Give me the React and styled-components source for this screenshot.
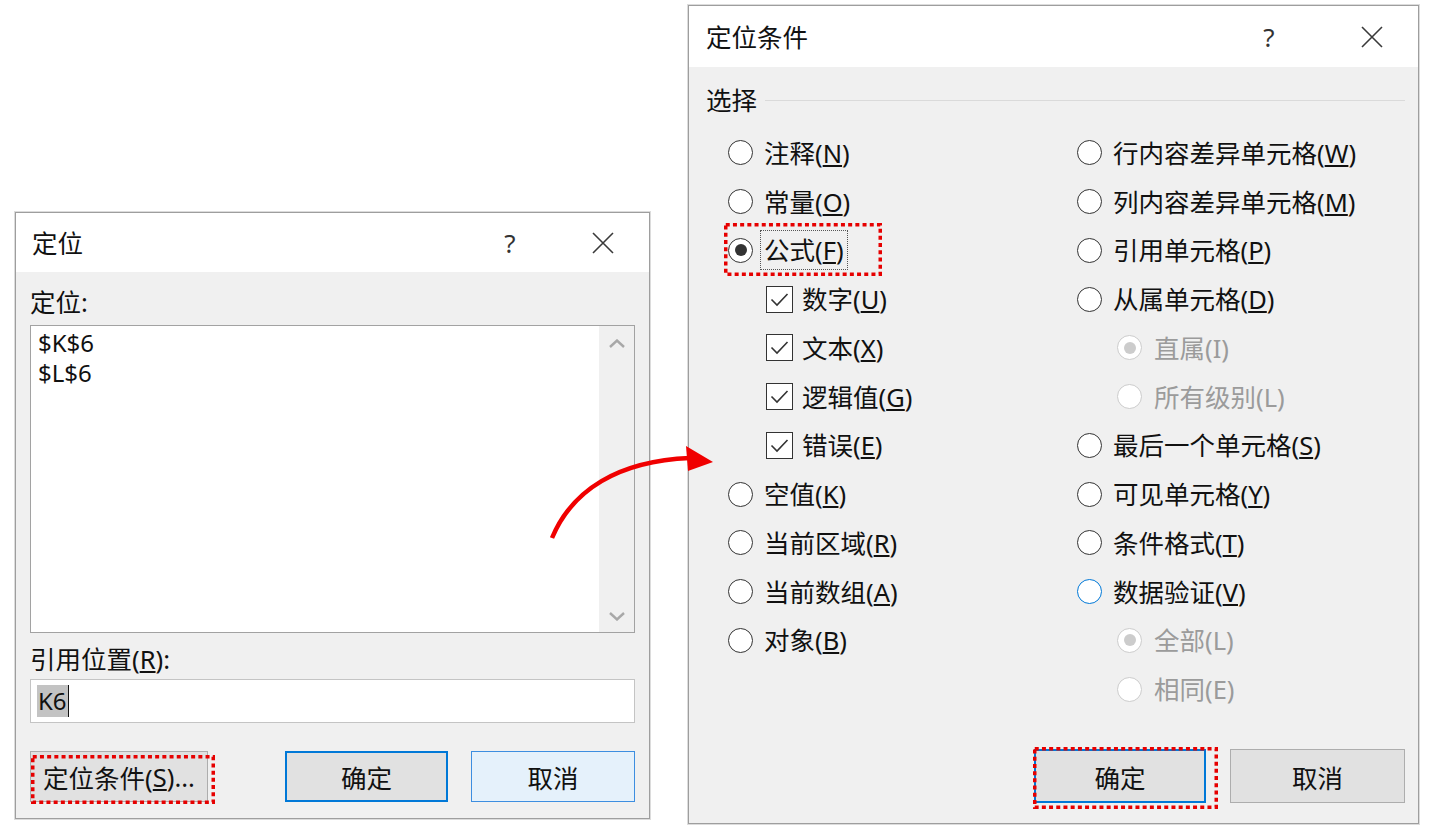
import React from "react";
import styled, { createGlobalStyle } from "styled-components";

const GlobalStyle = createGlobalStyle`
  html, body {
    margin: 0;
    padding: 0;
    background: #fff;
  }
  body {
    font-family: "Noto Sans", "Noto Sans CJK SC", sans-serif;
    color: #111;
  }
`;

const Page = styled.div`
  position: relative;
  width: 1433px;
  height: 835px;
  box-sizing: border-box;
  padding: 5px 0 0 15px;
  display: flex;
  align-items: flex-start;
  gap: 38px;
`;

const Dialog = styled.div`
  width: ${(p) => p.$w}px;
  height: ${(p) => p.$h}px;
  margin-top: ${(p) => p.$top || 0}px;
  box-sizing: border-box;
  border: 1px solid #9e9e9e;
  box-shadow: 0 0 0 1px #dcdcdc;
  background: #f0f0f0;
  display: flex;
  flex-direction: column;
`;

const TitleBar = styled.div`
  height: ${(p) => p.$h}px;
  flex: none;
  background: #fff;
  display: flex;
  align-items: center;
  padding-left: ${(p) => p.$pad}px;
  font-size: 25.5px;
  line-height: 30px;
`;

const TitleText = styled.div`
  flex: 1;
`;

const TitleButtons = styled.div`
  display: flex;
  align-items: center;
  gap: ${(p) => p.$gap}px;
  margin-right: 26px;
`;

const HelpGlyph = styled.span`
  width: 40px;
  text-align: center;
  font-size: 26px;
  color: #333;
`;

const CloseGlyph = styled.span`
  width: 40px;
  height: 30px;
  display: flex;
  align-items: center;
  justify-content: center;
`;

const Body = styled.div`
  flex: 1;
  display: flex;
  flex-direction: column;
  padding: ${(p) => p.$pad};
`;

const Label = styled.div`
  font-size: 25.5px;
  line-height: 30px;
  margin-top: ${(p) => p.$mt || 0}px;
`;

const ListBox = styled.div`
  margin-top: 8px;
  height: 308px;
  box-sizing: border-box;
  border: 1px solid #a2a2a2;
  background: #fff;
  display: flex;
`;

const ListItems = styled.div`
  flex: 1;
  padding: 2px 7px;
  font-size: 24px;
  line-height: 30px;
`;

const ScrollTrack = styled.div`
  width: 35px;
  background: #f0f0f0;
  display: flex;
  flex-direction: column;
  justify-content: space-between;
  align-items: center;
  padding: 13px 0 11px;
`;

const TextInput = styled.div`
  margin-top: 5px;
  height: 44px;
  box-sizing: border-box;
  border: 1px solid #c4c4c4;
  background: #fff;
  display: flex;
  align-items: center;
  padding-left: 6px;
  font-size: 24px;
`;

const Selected = styled.span`
  background: #c3c3c3;
  line-height: 32px;
  padding: 0 1px;
`;

const Caret = styled.span`
  width: 1.5px;
  height: 32px;
  background: #111;
`;

const ButtonRow = styled.div`
  margin-top: auto;
  display: flex;
  align-items: center;
  gap: ${(p) => p.$gap}px;
  justify-content: flex-end;
`;

const Spacer = styled.div`
  flex: 1;
`;

const Button = styled.div`
  position: relative;
  width: ${(p) => p.$w}px;
  height: ${(p) => p.$h}px;
  box-sizing: border-box;
  display: flex;
  align-items: center;
  justify-content: center;
  font-size: 25.5px;
  background: ${(p) => (p.$variant === "hover" ? "#e5f1fb" : "#e1e1e1")};
  border: ${(p) =>
    p.$variant === "default"
      ? "2px solid #0078d7"
      : p.$variant === "hover"
      ? "1.5px solid #3d8ee0"
      : "1px solid #adadad"};
`;

const Frame = styled.svg`
  position: absolute;
  left: ${(p) => p.$x}px;
  top: ${(p) => p.$y}px;
  pointer-events: none;
  overflow: visible;
`;

const GroupHead = styled.div`
  display: flex;
  align-items: center;
  font-size: 25.5px;
  line-height: 30px;
`;

const GroupLine = styled.div`
  flex: 1;
  height: 1px;
  background: #dadada;
  margin-left: 8px;
`;

const Options = styled.div`
  margin-top: 13.6px;
  margin-left: 22px;
  display: grid;
  grid-template-columns: 349px 1fr;
`;

const Column = styled.div`
  display: flex;
  flex-direction: column;
`;

const Row = styled.div`
  position: relative;
  height: 48.75px;
  display: flex;
  align-items: center;
  padding-left: ${(p) => p.$indent || 0}px;
  gap: ${(p) => p.$gap || 11}px;
  font-size: 25.5px;
  line-height: 30px;
  color: ${(p) => (p.$disabled ? "#9b9b9b" : "inherit")};
`;

const RadioDot = styled.span`
  position: relative;
  flex: none;
  width: 25px;
  height: 25px;
  box-sizing: border-box;
  border-radius: 50%;
  background: #fff;
  border: 1.6px solid
    ${(p) => (p.$disabled ? "#cccccc" : p.$hover ? "#0078d7" : "#333")};
  &::after {
    content: "";
    display: ${(p) => (p.$checked ? "block" : "none")};
    position: absolute;
    left: 50%;
    top: 50%;
    width: 12px;
    height: 12px;
    margin: -6px 0 0 -6px;
    border-radius: 50%;
    background: ${(p) => (p.$disabled ? "#cccccc" : "#333")};
  }
`;

const CheckBox = styled.span`
  flex: none;
  width: 27px;
  height: 27px;
  box-sizing: border-box;
  border: 1.6px solid #333;
  background: #fff;
  display: flex;
`;

const FocusText = styled.span`
  margin: -5px -4px;
  padding: 4px 3px;
  border: 1px dotted #555;
`;

const Overlay = styled.svg`
  position: absolute;
  left: 0;
  top: 0;
  pointer-events: none;
`;

const Dotted = ({ x, y, w, h }) => (
  <Frame $x={x} $y={y} width={w} height={h}>
    <rect
      x="1.75"
      y="1.75"
      width={w - 3.5}
      height={h - 3.5}
      fill="none"
      stroke="#e60000"
      strokeWidth="3.5"
      strokeDasharray="4 3.2"
    />
  </Frame>
);

const CloseIcon = () => (
  <svg width="22" height="22" viewBox="0 0 22 22">
    <path d="M1 1 L21 21 M21 1 L1 21" stroke="#3a3a3a" strokeWidth="1.6" fill="none" />
  </svg>
);

const Chevron = ({ up }) => (
  <svg width="16" height="9" viewBox="0 0 16 9">
    <path
      d={up ? "M1 8 L8 1.5 L15 8" : "M1 1 L8 7.5 L15 1"}
      stroke="#a8a8a8"
      strokeWidth="2.4"
      fill="none"
    />
  </svg>
);

const CheckMark = () => (
  <svg width="24" height="24" viewBox="0 0 24 24">
    <path d="M4.5 12.5 L10 18 L20.5 7" stroke="#333" strokeWidth="1.6" fill="none" />
  </svg>
);

const Title = ({ text, h, pad, helpGap }) => (
  <TitleBar $h={h} $pad={pad}>
    <TitleText>{text}</TitleText>
    <TitleButtons $gap={helpGap}>
      <HelpGlyph>?</HelpGlyph>
      <CloseGlyph>
        <CloseIcon />
      </CloseGlyph>
    </TitleButtons>
  </TitleBar>
);

const Key = ({ k }) => (
  <>
    (<u>{k}</u>)
  </>
);

const Radio = ({ label, k, checked, disabled, hover, indent }) => (
  <Row $indent={indent} $disabled={disabled} $gap={disabled ? 12 : 11}>
    <RadioDot $checked={checked} $disabled={disabled} $hover={hover} />
    <span>
      {label}
      {disabled ? `(${k})` : <Key k={k} />}
    </span>
  </Row>
);

const Check = ({ label, k }) => (
  <Row $indent={38} $gap={9}>
    <CheckBox>
      <CheckMark />
    </CheckBox>
    <span>
      {label}
      <Key k={k} />
    </span>
  </Row>
);

const GoToDialog = () => (
  <Dialog $w={635} $h={607} $top={207}>
    <Title text="定位" h={59} pad={16} helpGap={53} />
    <Body $pad="15px 14px 16px 14px">
      <Label>定位:</Label>
      <ListBox>
        <ListItems>
          <div>$K$6</div>
          <div>$L$6</div>
        </ListItems>
        <ScrollTrack>
          <Chevron up />
          <Chevron />
        </ScrollTrack>
      </ListBox>
      <Label $mt={11}>
        引用位置
        <Key k="R" />:
      </Label>
      <TextInput>
        <Selected>K6</Selected>
        <Caret />
      </TextInput>
      <ButtonRow $gap={23}>
        <Button $w={178} $h={51}>
          定位条件(<u>S</u>)...
          <Dotted x={0} y={3} w={184} h={49} />
        </Button>
        <Spacer />
        <Button $w={163} $h={51} $variant="default">
          确定
        </Button>
        <Button $w={164} $h={51} $variant="hover">
          取消
        </Button>
      </ButtonRow>
    </Body>
  </Dialog>
);

const SpecialDialog = () => (
  <Dialog $w={731} $h={819}>
    <Title text="定位条件" h={61} pad={17} helpGap={63} />
    <Body $pad="18px 13px 20px 17px">
      <GroupHead>
        选择
        <GroupLine />
      </GroupHead>
      <Options>
        <Column>
          <Radio label="注释" k="N" />
          <Radio label="常量" k="O" />
          <Row $gap={11}>
            <RadioDot $checked />
            <FocusText>
              公式
              <Key k="F" />
            </FocusText>
            <Dotted x={-4} y={-3} w={158} h={53} />
          </Row>
          <Check label="数字" k="U" />
          <Check label="文本" k="X" />
          <Check label="逻辑值" k="G" />
          <Check label="错误" k="E" />
          <Radio label="空值" k="K" />
          <Radio label="当前区域" k="R" />
          <Radio label="当前数组" k="A" />
          <Radio label="对象" k="B" />
        </Column>
        <Column>
          <Radio label="行内容差异单元格" k="W" />
          <Radio label="列内容差异单元格" k="M" />
          <Radio label="引用单元格" k="P" />
          <Radio label="从属单元格" k="D" />
          <Radio label="直属" k="I" indent={40} checked disabled />
          <Radio label="所有级别" k="L" indent={40} disabled />
          <Radio label="最后一个单元格" k="S" />
          <Radio label="可见单元格" k="Y" />
          <Radio label="条件格式" k="T" />
          <Radio label="数据验证" k="V" hover />
          <Radio label="全部" k="L" indent={40} checked disabled />
          <Radio label="相同" k="E" indent={40} disabled />
        </Column>
      </Options>
      <ButtonRow $gap={24}>
        <Button $w={172} $h={54} $variant="default">
          确定
          <Dotted x={-3} y={-4} w={185} h={62} />
        </Button>
        <Button $w={175} $h={54}>
          取消
        </Button>
      </ButtonRow>
    </Body>
  </Dialog>
);

const Arrow = () => (
  <Overlay width="1433" height="835">
    <path
      d="M552 538 C572 490 618 461 690 458"
      stroke="#f00000"
      strokeWidth="4.5"
      fill="none"
    />
    <polygon points="686,446 713,462 688,471" fill="#f00000" />
  </Overlay>
);

export default function App() {
  return (
    <>
      <GlobalStyle />
      <Page>
        <GoToDialog />
        <SpecialDialog />
        <Arrow />
      </Page>
    </>
  );
}
